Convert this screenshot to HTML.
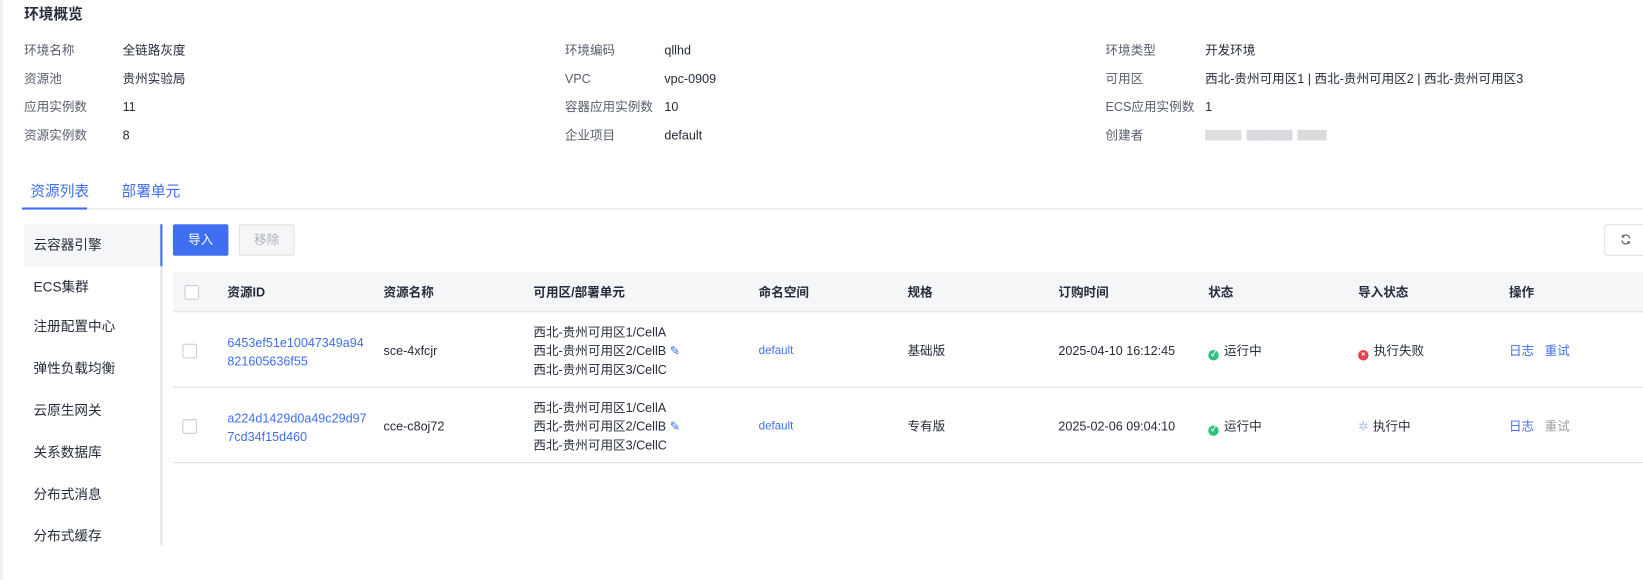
<!DOCTYPE html>
<html><head><meta charset="utf-8"><style>
*{box-sizing:border-box;margin:0;padding:0}
html,body{width:1643px;height:579px;overflow:hidden;background:#fff}
#w{position:absolute;left:0;top:0;width:1568px;height:553px;transform:scale(1.0479);transform-origin:0 0;font-family:"Liberation Sans","Noto Sans CJK SC",sans-serif;font-size:12px;color:#252b3a}
.strip{position:absolute;left:0;top:0;width:3px;height:553px;background:#eef0f4}
.a{position:absolute;white-space:nowrap;line-height:16px}
.lbl{color:#575d6c}
.blue{color:#3e6ff0}
.title{font-size:14px;font-weight:bold;color:#252b3a}
.hdr{position:absolute;left:165px;top:260px;width:1403px;height:38px;background:#f5f6f8;border-bottom:1px solid #dfe1e6}
.row{position:absolute;left:165px;width:1403px;border-bottom:1px solid #dfe1e6}
.cb{position:absolute;width:14px;height:14px;border:1px solid #c9ccd3;border-radius:2px;background:#fff}
.th{font-weight:bold;color:#252b3a}
.side{position:absolute;left:23px;width:132px;height:40px;line-height:40px;padding-left:9px;font-size:13px;color:#252b3a}
.dot{display:inline-block;width:10px;height:10px;border-radius:50%;vertical-align:-1px;margin-right:5px;position:relative;color:#fff;font-size:7px;line-height:10px;text-align:center;font-weight:bold}
</style></head><body><div id="w">
<div class="strip"></div>
<div class="a title" style="left:23px;top:5px">环境概览</div>

<div class="a lbl" style="left:23px;top:40px">环境名称</div><div class="a" style="left:117px;top:40px">全链路灰度</div>
<div class="a lbl" style="left:23px;top:67px">资源池</div><div class="a" style="left:117px;top:67px">贵州实验局</div>
<div class="a lbl" style="left:23px;top:94px">应用实例数</div><div class="a" style="left:117px;top:94px">11</div>
<div class="a lbl" style="left:23px;top:121px">资源实例数</div><div class="a" style="left:117px;top:121px">8</div>

<div class="a lbl" style="left:539px;top:40px">环境编码</div><div class="a" style="left:634px;top:40px">qllhd</div>
<div class="a lbl" style="left:539px;top:67px">VPC</div><div class="a" style="left:634px;top:67px">vpc-0909</div>
<div class="a lbl" style="left:539px;top:94px">容器应用实例数</div><div class="a" style="left:634px;top:94px">10</div>
<div class="a lbl" style="left:539px;top:121px">企业项目</div><div class="a" style="left:634px;top:121px">default</div>

<div class="a lbl" style="left:1055px;top:40px">环境类型</div><div class="a" style="left:1150px;top:40px">开发环境</div>
<div class="a lbl" style="left:1055px;top:67px">可用区</div><div class="a" style="left:1150px;top:67px">西北-贵州可用区1 | 西北-贵州可用区2 | 西北-贵州可用区3</div>
<div class="a lbl" style="left:1055px;top:94px">ECS应用实例数</div><div class="a" style="left:1150px;top:94px">1</div>
<div class="a lbl" style="left:1055px;top:121px">创建者</div>
<div style="position:absolute;left:1150px;top:124px;width:116px;height:10px;background:linear-gradient(90deg,#d6d6da 0 30%,#fff 30% 34%,#cfd0d6 34% 72%,#fff 72% 76%,#d3d0d2 76%);opacity:.8"></div>

<div class="a blue" style="left:29px;top:173px;font-size:14px;line-height:18px">资源列表</div>
<div class="a blue" style="left:116px;top:173px;font-size:14px;line-height:18px">部署单元</div>
<div style="position:absolute;left:23px;top:199px;width:1545px;height:1px;background:#dfe1e6"></div>
<div style="position:absolute;left:21px;top:198px;width:62px;height:2px;background:#3e6ff0"></div>

<div style="position:absolute;left:153px;top:214px;width:2px;height:306px;background:#dfe1e6"></div>
<div style="position:absolute;left:23px;top:214px;width:130px;height:40px;background:#f5f6f8"></div>
<div style="position:absolute;left:153px;top:214px;width:2px;height:40px;background:#3e6ff0"></div>
<div class="side blue" style="top:214px">云容器引擎</div>
<div class="side" style="top:254px">ECS集群</div>
<div class="side" style="top:292px">注册配置中心</div>
<div class="side" style="top:332px">弹性负载均衡</div>
<div class="side" style="top:372px">云原生网关</div>
<div class="side" style="top:412px">关系数据库</div>
<div class="side" style="top:452px">分布式消息</div>
<div class="side" style="top:492px">分布式缓存</div>

<div style="position:absolute;left:165px;top:214px;width:53px;height:30px;background:#3e6ff0;border-radius:2px;color:#fff;text-align:center;line-height:30px">导入</div>
<div style="position:absolute;left:228px;top:214px;width:53px;height:30px;border:1px solid #dfe1e6;border-radius:2px;background:#f5f6f8;color:#adb0b8;text-align:center;line-height:28px">移除</div>
<div style="position:absolute;left:1531px;top:214px;width:60px;height:30px;border:1px solid #dfe1e6;border-radius:2px;background:#fff"></div>
<svg style="position:absolute;left:1546px;top:223px" width="11" height="11" viewBox="0 0 12 12" fill="none" stroke="#575d6c" stroke-width="1.2"><path d="M10 5A4 4 0 0 0 2.5 3.5M2 7a4 4 0 0 0 7.5 1.5"/><path d="M2.5 1.5v2h2M9.5 10.5v-2h-2"/></svg>

<div class="hdr"></div>
<div class="cb" style="left:176px;top:272px"></div>
<div class="a th" style="left:217px;top:271px">资源ID</div>
<div class="a th" style="left:366px;top:271px">资源名称</div>
<div class="a th" style="left:509px;top:271px">可用区/部署单元</div>
<div class="a th" style="left:724px;top:271px">命名空间</div>
<div class="a th" style="left:866px;top:271px">规格</div>
<div class="a th" style="left:1010px;top:271px">订购时间</div>
<div class="a th" style="left:1153px;top:271px">状态</div>
<div class="a th" style="left:1296px;top:271px">导入状态</div>
<div class="a th" style="left:1440px;top:271px">操作</div>

<div class="row" style="top:298px;height:72px"></div>
<div class="cb" style="left:174px;top:328px"></div>
<div class="a blue" style="left:217px;top:318px;line-height:18px">6453ef51e10047349a94<br>821605636f55</div>
<div class="a" style="left:366px;top:327px">sce-4xfcjr</div>
<div class="a" style="left:509px;top:308px;line-height:18px">西北-贵州可用区1/CellA<br>西北-贵州可用区2/CellB <span class="blue">✎</span><br>西北-贵州可用区3/CellC</div>
<div class="a blue" style="left:724px;top:327px;font-size:11px">default</div>
<div class="a" style="left:866px;top:327px">基础版</div>
<div class="a" style="left:1010px;top:327px">2025-04-10 16:12:45</div>
<div class="a" style="left:1153px;top:327px"><span class="dot" style="background:#2fc27f">✓</span>运行中</div>
<div class="a" style="left:1296px;top:327px"><span class="dot" style="background:#e8404d">×</span>执行失败</div>
<div class="a blue" style="left:1440px;top:327px">日志&nbsp;&nbsp;&nbsp;重试</div>

<div class="row" style="top:370px;height:72px"></div>
<div class="cb" style="left:174px;top:400px"></div>
<div class="a blue" style="left:217px;top:390px;line-height:18px">a224d1429d0a49c29d97<br>7cd34f15d460</div>
<div class="a" style="left:366px;top:399px">cce-c8oj72</div>
<div class="a" style="left:509px;top:380px;line-height:18px">西北-贵州可用区1/CellA<br>西北-贵州可用区2/CellB <span class="blue">✎</span><br>西北-贵州可用区3/CellC</div>
<div class="a blue" style="left:724px;top:399px;font-size:11px">default</div>
<div class="a" style="left:866px;top:399px">专有版</div>
<div class="a" style="left:1010px;top:399px">2025-02-06 09:04:10</div>
<div class="a" style="left:1153px;top:399px"><span class="dot" style="background:#2fc27f">✓</span>运行中</div>
<div class="a" style="left:1296px;top:399px"><span style="color:#a9c0f5;margin-right:4px">✲</span>执行中</div>
<div class="a" style="left:1440px;top:399px"><span class="blue">日志</span>&nbsp;&nbsp;&nbsp;<span style="color:#9a9ca3">重试</span></div>
</div></body></html>
